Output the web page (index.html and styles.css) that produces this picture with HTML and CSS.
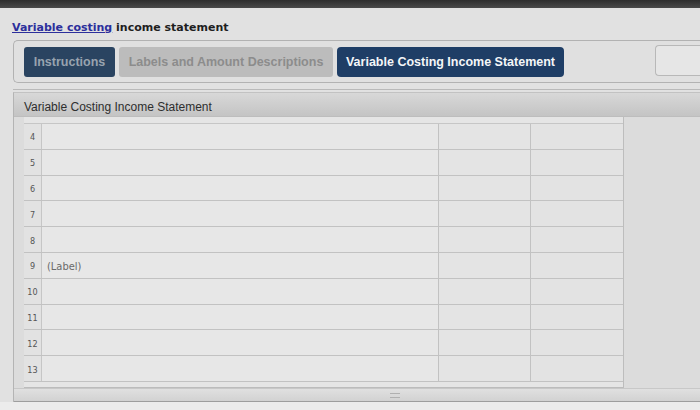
FILE: index.html
```html
<!DOCTYPE html>
<html>
<head>
<meta charset="utf-8">
<link rel="stylesheet" href="styles.css">
</head>
<body>
<div class="topbar"></div>
<div class="title"><a class="link" href="#">Variable costing</a> income statement</div>
<div class="tabbar">
  <div class="tab tab-dark">Instructions</div>
  <div class="tab tab-gray">Labels and Amount Descriptions</div>
  <div class="tab tab-active">Variable Costing Income Statement</div>
  <div class="sidebox"></div>
</div>
<div class="sep"></div>
<div class="panel">
  <div class="panel-head">Variable Costing Income Statement</div>
  <div class="panel-body">
    <div class="sheet">
      <div class="strip"></div>
      <div class="row"><div class="num">4</div><div class="c1"></div><div class="c2"></div><div class="c3"></div></div>
      <div class="row"><div class="num">5</div><div class="c1"></div><div class="c2"></div><div class="c3"></div></div>
      <div class="row"><div class="num">6</div><div class="c1"></div><div class="c2"></div><div class="c3"></div></div>
      <div class="row"><div class="num">7</div><div class="c1"></div><div class="c2"></div><div class="c3"></div></div>
      <div class="row"><div class="num">8</div><div class="c1"></div><div class="c2"></div><div class="c3"></div></div>
      <div class="row"><div class="num">9</div><div class="c1 label">(Label)</div><div class="c2"></div><div class="c3"></div></div>
      <div class="row"><div class="num">10</div><div class="c1"></div><div class="c2"></div><div class="c3"></div></div>
      <div class="row"><div class="num">11</div><div class="c1"></div><div class="c2"></div><div class="c3"></div></div>
      <div class="row"><div class="num">12</div><div class="c1"></div><div class="c2"></div><div class="c3"></div></div>
      <div class="row"><div class="num">13</div><div class="c1"></div><div class="c2"></div><div class="c3"></div></div>
      <div class="tail"></div>
    </div>
  </div>
  <div class="scroll"><div class="grip"></div></div>
</div>
<div class="footer"></div>
</body>
</html>
```

FILE: styles.css
```css
html, body {
  margin: 0;
  padding: 0;
}
body {
  width: 700px;
  height: 410px;
  overflow: hidden;
  background: #e1e1e1;
  font-family: "Liberation Sans", Arial, sans-serif;
}
.topbar {
  height: 8px;
  background: linear-gradient(#2e2e2e, #4a4a4a);
}
.title {
  height: 32px;
  box-sizing: border-box;
  padding: 12px 0 0 12px;
  font-family: "DejaVu Sans", sans-serif;
  font-weight: bold;
  font-size: 11px;
  line-height: 16px;
  color: #1e1e1e;
}
.link {
  color: #2c2f9c;
  text-decoration: underline;
}
.tabbar {
  margin-left: 13px;
  height: 43px;
  box-sizing: border-box;
  border: 1px solid #b2b2b2;
  border-right: none;
  border-radius: 5px 0 0 5px;
  background: #e0e0e0;
  display: flex;
  align-items: flex-start;
  gap: 4px;
  padding: 6px 0 0 10px;
}
.tab {
  height: 30px;
  box-sizing: border-box;
  display: flex;
  align-items: center;
  justify-content: center;
  font-weight: bold;
  font-size: 12.5px;
  border-radius: 3px;
}
.tab-dark {
  width: 91px;
  background: #2a4461;
  color: #98a3af;
}
.tab-gray {
  width: 214px;
  background: #bcbcbc;
  color: #8c8c8c;
}
.tab-active {
  width: 227px;
  background: #1f3e66;
  color: #f4f6f8;
  border-radius: 4px;
}
.sidebox {
  margin-left: auto;
  margin-top: -2px;
  width: 45px;
  height: 31px;
  box-sizing: border-box;
  border: 1px solid #b8b8b8;
  border-right: none;
  border-radius: 4px 0 0 4px;
  background: #e6e6e6;
}
.sep {
  margin: 6px 0 0 13px;
  height: 1px;
  background: #b9b9b9;
}
.panel {
  margin: 2px 0 0 13px;
  border-left: 1px solid #b4b4b4;
  border-top: 1px solid #c2c2c2;
  background: #dcdcdc;
  display: flex;
  flex-direction: column;
}
.panel-head {
  height: 24px;
  flex: none;
  box-sizing: border-box;
  padding: 7px 0 0 10px;
  font-size: 12px;
  color: #2e2e2e;
  background: linear-gradient(#d8d8d8, #c4c4c4);
  border-bottom: 1px solid #bdbdbd;
}
.panel-body {
  height: 271px;
  flex: none;
  box-sizing: border-box;
  padding-left: 10px;
  background: #dcdcdc;
}
.sheet {
  width: 600px;
  height: 271px;
  box-sizing: border-box;
  background: #e5e5e5;
  border-right: 1px solid #bdbdbd;
  display: flex;
  flex-direction: column;
}
.strip {
  height: 6px;
  flex: none;
  border-bottom: 1px solid #c6c6c6;
}
.row {
  height: 25.8px;
  flex: none;
  box-sizing: border-box;
  display: grid;
  grid-template-columns: 18px 397px 92px 1fr;
  border-bottom: 1px solid #c2c2c2;
}
.row > div {
  box-sizing: border-box;
}
.num {
  background: #e2e2e2;
  border-right: 1px solid #c6c6c6;
  display: flex;
  align-items: center;
  justify-content: center;
  padding-top: 2px;
  font-family: "DejaVu Sans Condensed", "DejaVu Sans", sans-serif;
  font-size: 9px;
  color: #555;
}
.c1 {
  border-right: 1px solid #c2c2c2;
  background: #e7e7e7;
}
.c2 {
  border-right: 1px solid #c2c2c2;
  background: #e4e4e4;
}
.c3 {
  background: #e3e3e3;
}
.label {
  display: flex;
  align-items: center;
  padding: 2px 0 0 5px;
  font-family: "Liberation Sans Narrow", "DejaVu Sans Condensed", sans-serif;
  font-size: 11px;
  color: #6a6a6a;
}
.tail {
  flex: 1;
  border-bottom: 1px solid #bcbcbc;
}
.scroll {
  height: 14px;
  flex: none;
  box-sizing: border-box;
  background: linear-gradient(#e0e0e0, #d2d2d2);
  border-top: 1px solid #c8c8c8;
  border-bottom: 1px solid #9e9e9e;
  position: relative;
}
.grip {
  position: absolute;
  left: 376px;
  top: 4px;
  width: 10px;
  height: 3px;
  border-top: 1px solid #b0b0b0;
  border-bottom: 1px solid #b0b0b0;
}
.footer {
  height: 10px;
  background: #ececec;
}
```
